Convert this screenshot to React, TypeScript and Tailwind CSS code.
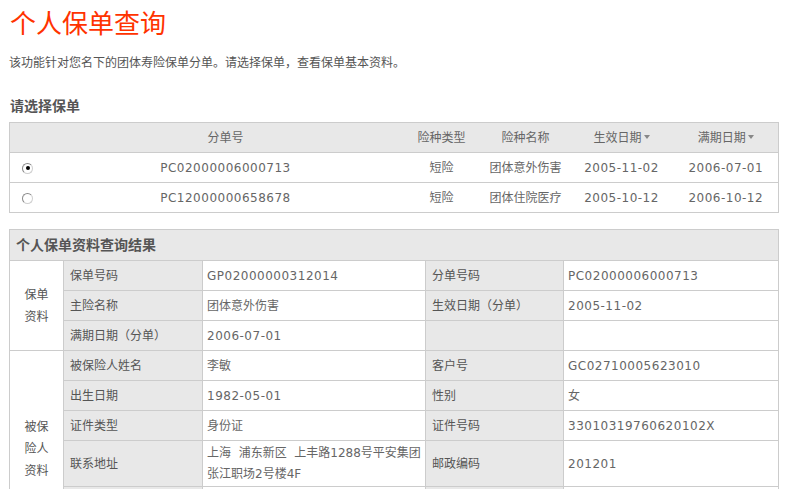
import React, { useState } from 'react';

type Policy = {
  id: string;
  type: string;
  name: string;
  start: string;
  end: string;
};

const policies: Policy[] = [
  { id: 'PC02000006000713', type: '短险', name: '团体意外伤害', start: '2005-11-02', end: '2006-07-01' },
  { id: 'PC12000000658678', type: '短险', name: '团体住院医疗', start: '2005-10-12', end: '2006-10-12' },
];

const SortArrow = () => (
  <svg width="6" height="4" viewBox="0 0 6 4" className="inline-block ml-[2px] mb-[2px]">
    <path d="M0 0 L6 0 L3 4 Z" fill="#888" />
  </svg>
);

const Radio = ({ checked, onClick }: { checked: boolean; onClick: () => void }) => (
  <span
    onClick={onClick}
    className="inline-flex items-center justify-center w-[11px] h-[11px] rounded-full border border-[#8a8a8a] border-b-[#cfcfcf] border-r-[#cfcfcf] bg-white cursor-pointer align-middle"
  >
    {checked && <span className="w-[4px] h-[4px] rounded-full bg-black" />}
  </span>
);

const num = "tracking-[0.5px]";

const App: React.FC = () => {
  const [selected, setSelected] = useState(0);

  const th = "h-[30px] border-b border-[#cccccc] bg-[#e8e8e8] font-normal text-center";
  const td = "h-[30px] text-center";
  const label = "h-[30px] border border-[#cccccc] bg-[#e8e8e8] pl-[6px] text-left text-[#555]";
  const value = "h-[30px] border border-[#cccccc] bg-white pl-[4px] text-left text-[#666]";

  return (
    <div className="min-h-screen bg-white px-[9px] font-['DejaVu_Sans','Noto_Sans_CJK_SC',sans-serif] text-[12px] text-[#666]">
      <h1 className="pt-[7px] pl-[1px] text-[26px] leading-[30px] font-normal text-[#ff3300] font-['Noto_Sans_CJK_SC',sans-serif]">
        个人保单查询
      </h1>
      <p className="mt-[15px] leading-[20px] text-[#555] font-['Noto_Sans_CJK_SC',sans-serif]">
        该功能针对您名下的团体寿险保单分单。请选择保单，查看保单基本资料。
      </p>

      <h2 className="mt-[23px] pl-[1px] text-[14px] leading-[20px] font-bold text-[#555] font-['Noto_Sans_CJK_SC',sans-serif]">
        请选择保单
      </h2>

      {/* policy list */}
      <table className="mt-[7px] w-[769px] table-fixed border-collapse border border-[#cccccc]">
        <colgroup>
          <col className="w-[40px]" />
          <col className="w-[352px]" />
          <col className="w-[80px]" />
          <col className="w-[88px]" />
          <col className="w-[104px]" />
          <col className="w-[105px]" />
        </colgroup>
        <thead>
          <tr>
            <th className={th}></th>
            <th className={th}>分单号</th>
            <th className={th}>险种类型</th>
            <th className={th}>险种名称</th>
            <th className={th}>生效日期<SortArrow /></th>
            <th className={th}>满期日期<SortArrow /></th>
          </tr>
        </thead>
        <tbody>
          {policies.map((p, i) => (
            <tr key={p.id} className={i > 0 ? 'border-t border-[#cccccc]' : ''}>
              <td className="h-[30px] pl-[12px]">
                <Radio checked={selected === i} onClick={() => setSelected(i)} />
              </td>
              <td className={`${td} ${num}`}>{p.id}</td>
              <td className={td}>{p.type}</td>
              <td className={td}>{p.name}</td>
              <td className={`${td} ${num}`}>{p.start}</td>
              <td className={`${td} ${num}`}>{p.end}</td>
            </tr>
          ))}
        </tbody>
      </table>

      {/* result detail */}
      <table className="mt-[16px] w-[769px] table-fixed border-collapse border border-[#cccccc]">
        <colgroup>
          <col className="w-[54px]" />
          <col className="w-[139px]" />
          <col className="w-[223px]" />
          <col className="w-[138px]" />
          <col className="w-[215px]" />
        </colgroup>
        <thead>
          <tr>
            <th
              colSpan={5}
              className="h-[31px] border border-[#cccccc] bg-[#e8e8e8] pl-[6px] text-left text-[14px] font-bold text-[#555]"
            >
              个人保单资料查询结果
            </th>
          </tr>
        </thead>
        <tbody>
          <tr>
            <td rowSpan={3} className="border border-[#cccccc] bg-white text-center leading-[22px] text-[#555]">
              保单<br />资料
            </td>
            <td className={label}>保单号码</td>
            <td className={`${value} ${num}`}>GP02000000312014</td>
            <td className={label}>分单号码</td>
            <td className={`${value} ${num}`}>PC02000006000713</td>
          </tr>
          <tr>
            <td className={label}>主险名称</td>
            <td className={value}>团体意外伤害</td>
            <td className={label}>生效日期（分单）</td>
            <td className={`${value} ${num}`}>2005-11-02</td>
          </tr>
          <tr>
            <td className={label}>满期日期（分单）</td>
            <td className={`${value} ${num}`}>2006-07-01</td>
            <td className={label}></td>
            <td className={value}></td>
          </tr>

          <tr>
            <td rowSpan={6} className="border border-[#cccccc] bg-white text-center leading-[22px] text-[#555]">
              被保<br />险人<br />资料
            </td>
            <td className={label}>被保险人姓名</td>
            <td className={value}>李敏</td>
            <td className={label}>客户号</td>
            <td className={`${value} ${num}`}>GC02710005623010</td>
          </tr>
          <tr>
            <td className={label}>出生日期</td>
            <td className={`${value} ${num}`}>1982-05-01</td>
            <td className={label}>性别</td>
            <td className={value}>女</td>
          </tr>
          <tr>
            <td className={label}>证件类型</td>
            <td className={value}>身份证</td>
            <td className={label}>证件号码</td>
            <td className={`${value} ${num}`}>33010319760620102X</td>
          </tr>
          <tr>
            <td className="h-[46px] border border-[#cccccc] bg-[#e8e8e8] pl-[6px] text-left text-[#555]">联系地址</td>
            <td className="h-[46px] border border-[#cccccc] bg-white pl-[4px] text-left leading-[21px] text-[#666]">
              上海&nbsp;&nbsp;浦东新区&nbsp;&nbsp;上丰路1288号平安集团<br />张江职场2号楼4F
            </td>
            <td className="h-[46px] border border-[#cccccc] bg-[#e8e8e8] pl-[6px] text-left text-[#555]">邮政编码</td>
            <td className={`h-[46px] border border-[#cccccc] bg-white pl-[4px] text-left text-[#666] ${num}`}>201201</td>
          </tr>
          <tr>
            <td className={label}></td>
            <td className={value}></td>
            <td className={label}></td>
            <td className={value}></td>
          </tr>
          <tr>
            <td className={label}></td>
            <td className={value}></td>
            <td className={label}></td>
            <td className={value}></td>
          </tr>
        </tbody>
      </table>
    </div>
  );
};

export default App;
